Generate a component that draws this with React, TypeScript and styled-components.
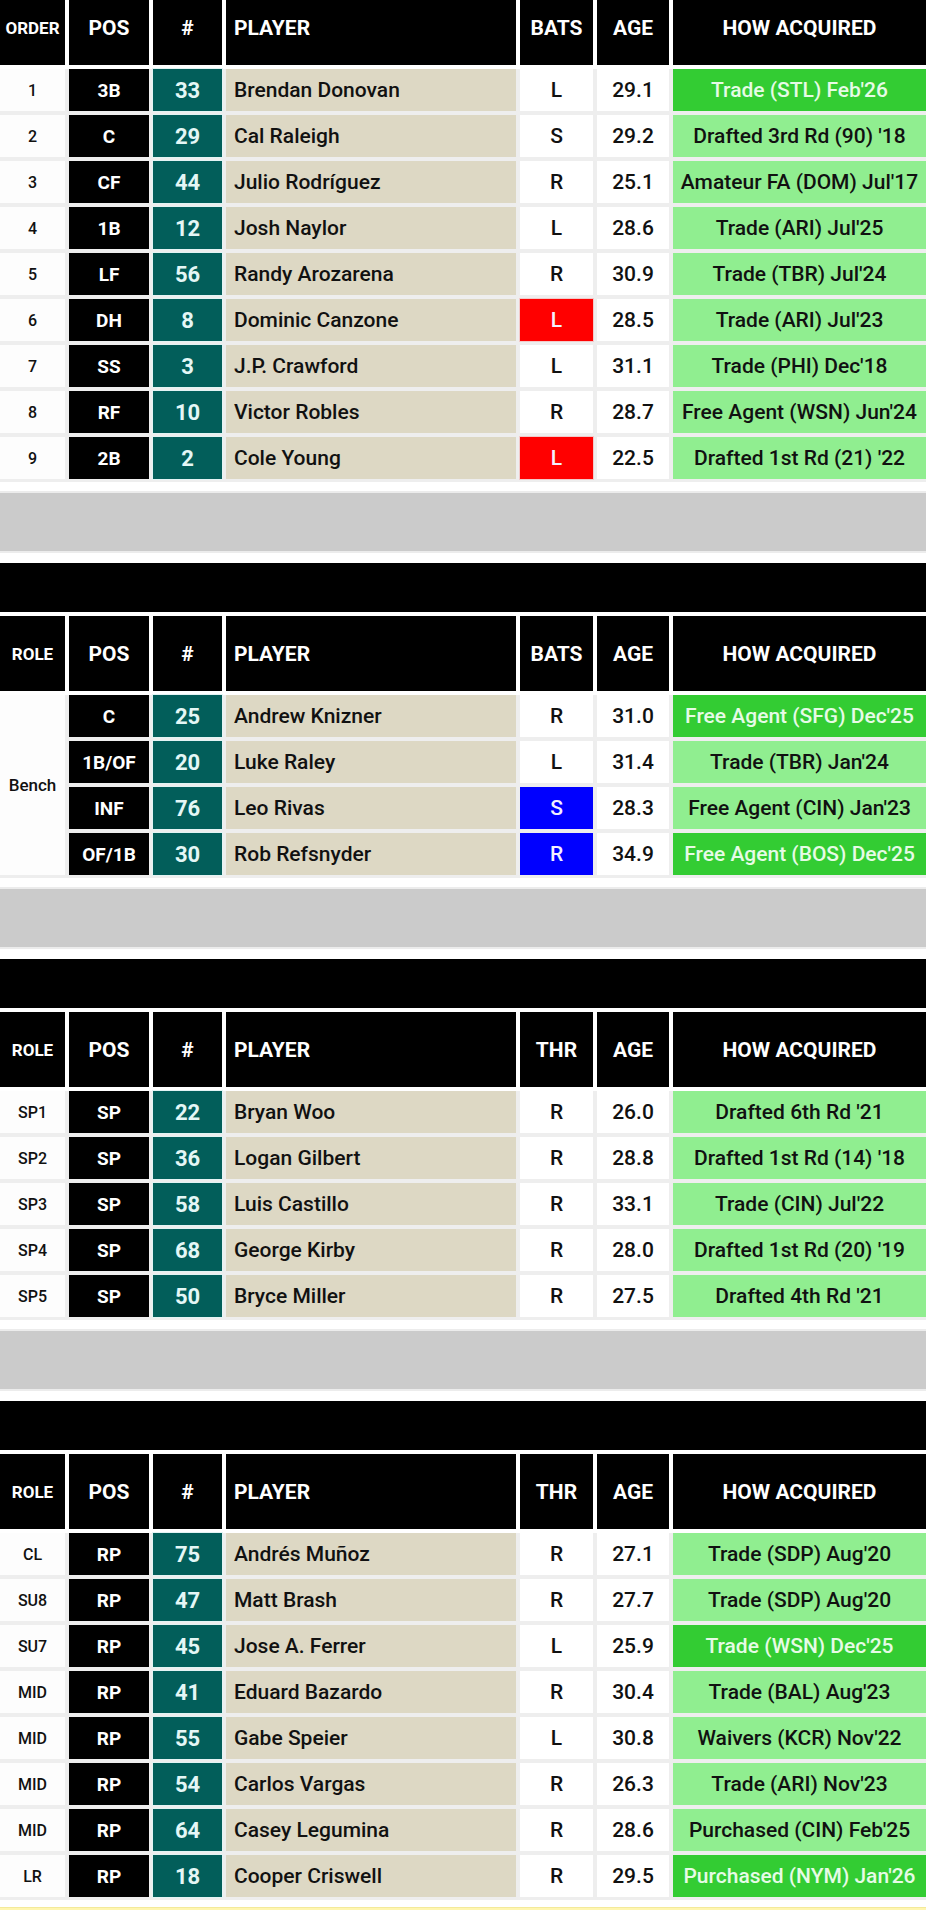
import React from "react";
import styled, { createGlobalStyle, css } from "styled-components";

const GlobalStyle = createGlobalStyle`
  html, body { margin: 0; padding: 0; background: #ffffff; }
  body { font-family: Roboto, "Liberation Sans", Arial, sans-serif; color: #111; }
  * { box-sizing: border-box; }
`;

const COLS = "65px 80px 69px 290px 73px 72px 1fr";

const Page = styled.div`
  width: 926px;
  display: flex;
  flex-direction: column;
`;

const Section = styled.section`
  display: flex;
  flex-direction: column;
`;

const AdBox = styled.div`
  margin-top: 9px;
  height: 62px;
  background: #cbcbcb;
  border-top: 2px solid #ececec;
  border-bottom: 2px solid #ececec;
`;

const TitleBar = styled.div`
  margin-top: 10px;
  height: 49px;
  background: #000;
`;

const HeaderRow = styled.div<{ $clipped?: boolean }>`
  display: grid;
  grid-template-columns: ${COLS};
  column-gap: 4px;
  background: #fff;
  margin-top: ${(p) => (p.$clipped ? "0" : "4px")};
  margin-bottom: 4px;
  height: ${(p) => (p.$clipped ? "65px" : "75px")};
`;

const HeadCell = styled.div<{ $small?: boolean; $left?: boolean; $clipped?: boolean }>`
  background: #000;
  color: #fff;
  font-weight: 700;
  font-size: ${(p) => (p.$small ? "17px" : "21px")};
  display: flex;
  align-items: center;
  justify-content: ${(p) => (p.$left ? "flex-start" : "center")};
  padding-left: ${(p) => (p.$left ? "8px" : "0")};
  padding-bottom: ${(p) => (p.$clipped ? "10px" : "0")};
  white-space: nowrap;
`;

const Body = styled.div`
  display: grid;
  grid-template-columns: ${COLS};
  grid-auto-rows: 42px;
  gap: 4px;
  background: #eeeeee;
  padding-bottom: 3px;
`;

const cellBase = css`
  display: flex;
  align-items: center;
  justify-content: center;
  white-space: nowrap;
  font-weight: 500;
`;

const RoleCell = styled.div<{ $span?: number }>`
  ${cellBase};
  background: #fdfdfd;
  font-size: 16px;
  color: #111;
  ${(p) => p.$span && css`grid-row: span ${p.$span}; font-size: 17px;`}
`;

const PosCell = styled.div`
  ${cellBase};
  background: #000;
  color: #fff;
  font-weight: 700;
  font-size: 19px;
`;

const NumCell = styled.div`
  ${cellBase};
  background: #025e5a;
  color: #e4f7f6;
  font-weight: 700;
  font-size: 22px;
  box-shadow: 0 0 0 1px #e3f4f4;
`;

const NameCell = styled.div`
  ${cellBase};
  justify-content: flex-start;
  padding-left: 8px;
  background: #ddd8c4;
  color: #111;
  font-size: 21px;
`;

const HandCell = styled.div<{ $tone?: "red" | "blue" }>`
  ${cellBase};
  font-size: 21px;
  background: ${(p) => (p.$tone === "red" ? "#ff0000" : p.$tone === "blue" ? "#0000ff" : "#ffffff")};
  color: ${(p) => (p.$tone ? "#f4f0ff" : "#111")};
  ${(p) => p.$tone === "red" && css`box-shadow: 0 0 0 1px #f3c9c9;`}
`;

const AgeCell = styled.div`
  ${cellBase};
  background: #fff;
  font-size: 21px;
  color: #111;
`;

const HowCell = styled.div<{ $fresh?: boolean }>`
  ${cellBase};
  font-size: 21px;
  background: ${(p) => (p.$fresh ? "#33cc33" : "#90ee90")};
  color: ${(p) => (p.$fresh ? "#e6fbe6" : "#111")};
`;

const BottomStrip = styled.div`
  margin-top: 7px;
  height: 4px;
  background: #fff6b0;
  border-top: 1px solid #f3ea9a;
`;

type Hand = "L" | "R" | "S";
type Row = {
  role?: string;
  pos: string;
  num: string;
  name: string;
  hand: Hand;
  tone?: "red" | "blue";
  age: string;
  how: string;
  fresh?: boolean;
};

type SectionData = {
  firstLabel: string;
  handLabel: string;
  rows: Row[];
  spanRole?: string;
  clipped?: boolean;
};

const sections: SectionData[] = [
  {
    firstLabel: "ORDER",
    handLabel: "BATS",
    clipped: true,
    rows: [
      { role: "1", pos: "3B", num: "33", name: "Brendan Donovan", hand: "L", age: "29.1", how: "Trade (STL) Feb'26", fresh: true },
      { role: "2", pos: "C", num: "29", name: "Cal Raleigh", hand: "S", age: "29.2", how: "Drafted 3rd Rd (90) '18" },
      { role: "3", pos: "CF", num: "44", name: "Julio Rodríguez", hand: "R", age: "25.1", how: "Amateur FA (DOM) Jul'17" },
      { role: "4", pos: "1B", num: "12", name: "Josh Naylor", hand: "L", age: "28.6", how: "Trade (ARI) Jul'25" },
      { role: "5", pos: "LF", num: "56", name: "Randy Arozarena", hand: "R", age: "30.9", how: "Trade (TBR) Jul'24" },
      { role: "6", pos: "DH", num: "8", name: "Dominic Canzone", hand: "L", tone: "red", age: "28.5", how: "Trade (ARI) Jul'23" },
      { role: "7", pos: "SS", num: "3", name: "J.P. Crawford", hand: "L", age: "31.1", how: "Trade (PHI) Dec'18" },
      { role: "8", pos: "RF", num: "10", name: "Victor Robles", hand: "R", age: "28.7", how: "Free Agent (WSN) Jun'24" },
      { role: "9", pos: "2B", num: "2", name: "Cole Young", hand: "L", tone: "red", age: "22.5", how: "Drafted 1st Rd (21) '22" },
    ],
  },
  {
    firstLabel: "ROLE",
    handLabel: "BATS",
    spanRole: "Bench",
    rows: [
      { pos: "C", num: "25", name: "Andrew Knizner", hand: "R", age: "31.0", how: "Free Agent (SFG) Dec'25", fresh: true },
      { pos: "1B/OF", num: "20", name: "Luke Raley", hand: "L", age: "31.4", how: "Trade (TBR) Jan'24" },
      { pos: "INF", num: "76", name: "Leo Rivas", hand: "S", tone: "blue", age: "28.3", how: "Free Agent (CIN) Jan'23" },
      { pos: "OF/1B", num: "30", name: "Rob Refsnyder", hand: "R", tone: "blue", age: "34.9", how: "Free Agent (BOS) Dec'25", fresh: true },
    ],
  },
  {
    firstLabel: "ROLE",
    handLabel: "THR",
    rows: [
      { role: "SP1", pos: "SP", num: "22", name: "Bryan Woo", hand: "R", age: "26.0", how: "Drafted 6th Rd '21" },
      { role: "SP2", pos: "SP", num: "36", name: "Logan Gilbert", hand: "R", age: "28.8", how: "Drafted 1st Rd (14) '18" },
      { role: "SP3", pos: "SP", num: "58", name: "Luis Castillo", hand: "R", age: "33.1", how: "Trade (CIN) Jul'22" },
      { role: "SP4", pos: "SP", num: "68", name: "George Kirby", hand: "R", age: "28.0", how: "Drafted 1st Rd (20) '19" },
      { role: "SP5", pos: "SP", num: "50", name: "Bryce Miller", hand: "R", age: "27.5", how: "Drafted 4th Rd '21" },
    ],
  },
  {
    firstLabel: "ROLE",
    handLabel: "THR",
    rows: [
      { role: "CL", pos: "RP", num: "75", name: "Andrés Muñoz", hand: "R", age: "27.1", how: "Trade (SDP) Aug'20" },
      { role: "SU8", pos: "RP", num: "47", name: "Matt Brash", hand: "R", age: "27.7", how: "Trade (SDP) Aug'20" },
      { role: "SU7", pos: "RP", num: "45", name: "Jose A. Ferrer", hand: "L", age: "25.9", how: "Trade (WSN) Dec'25", fresh: true },
      { role: "MID", pos: "RP", num: "41", name: "Eduard Bazardo", hand: "R", age: "30.4", how: "Trade (BAL) Aug'23" },
      { role: "MID", pos: "RP", num: "55", name: "Gabe Speier", hand: "L", age: "30.8", how: "Waivers (KCR) Nov'22" },
      { role: "MID", pos: "RP", num: "54", name: "Carlos Vargas", hand: "R", age: "26.3", how: "Trade (ARI) Nov'23" },
      { role: "MID", pos: "RP", num: "64", name: "Casey Legumina", hand: "R", age: "28.6", how: "Purchased (CIN) Feb'25" },
      { role: "LR", pos: "RP", num: "18", name: "Cooper Criswell", hand: "R", age: "29.5", how: "Purchased (NYM) Jan'26", fresh: true },
    ],
  },
];

const RosterSection: React.FC<{ data: SectionData }> = ({ data }) => (
  <Section>
    {!data.clipped && (
      <>
        <AdBox />
        <TitleBar />
      </>
    )}
    <HeaderRow $clipped={data.clipped}>
      <HeadCell $small $clipped={data.clipped}>{data.firstLabel}</HeadCell>
      <HeadCell $clipped={data.clipped}>POS</HeadCell>
      <HeadCell $clipped={data.clipped}>#</HeadCell>
      <HeadCell $left $clipped={data.clipped}>PLAYER</HeadCell>
      <HeadCell $clipped={data.clipped}>{data.handLabel}</HeadCell>
      <HeadCell $clipped={data.clipped}>AGE</HeadCell>
      <HeadCell $clipped={data.clipped}>HOW ACQUIRED</HeadCell>
    </HeaderRow>
    <Body>
      {data.rows.map((r, i) => (
        <React.Fragment key={r.name}>
          {data.spanRole ? (
            i === 0 ? <RoleCell $span={data.rows.length}>{data.spanRole}</RoleCell> : null
          ) : (
            <RoleCell>{r.role}</RoleCell>
          )}
          <PosCell>{r.pos}</PosCell>
          <NumCell>{r.num}</NumCell>
          <NameCell>{r.name}</NameCell>
          <HandCell $tone={r.tone}>{r.hand}</HandCell>
          <AgeCell>{r.age}</AgeCell>
          <HowCell $fresh={r.fresh}>{r.how}</HowCell>
        </React.Fragment>
      ))}
    </Body>
  </Section>
);

export default function App() {
  return (
    <>
      <GlobalStyle />
      <Page>
        {sections.map((s, i) => (
          <RosterSection key={i} data={s} />
        ))}
        <BottomStrip />
      </Page>
    </>
  );
}
